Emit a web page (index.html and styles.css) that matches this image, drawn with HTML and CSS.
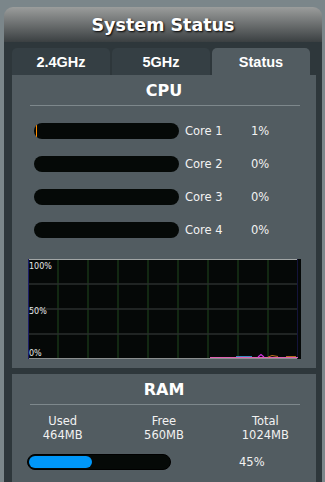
FILE: index.html
```html
<!DOCTYPE html>
<html lang="en">
<head>
    <meta charset="UTF-8">
    <meta name="viewport" content="width=device-width, initial-scale=1.0">
    <title>System Status</title>
    <link rel="stylesheet" href="styles.css">
</head>
<body>
    <div class="panel">
        <div class="header">System Status</div>

        <div class="frame">
            <!-- Pestañas -->
            <div class="tabs">
                <div class="tab">2.4GHz</div>
                <div class="tab">5GHz</div>
                <div class="tab active">Status</div>
            </div>

            <!-- Sección CPU -->
            <div class="section cpu">
                <div class="section-title">CPU</div>
                <div class="divider"></div>

                <div class="core-row">
                    <div class="core-bar"><div class="core-fill" style="width: 1%"></div></div>
                    <span class="core-name">Core 1</span>
                    <span class="core-pct">1%</span>
                </div>
                <div class="core-row">
                    <div class="core-bar"><div class="core-fill" style="width: 0%"></div></div>
                    <span class="core-name">Core 2</span>
                    <span class="core-pct">0%</span>
                </div>
                <div class="core-row">
                    <div class="core-bar"><div class="core-fill" style="width: 0%"></div></div>
                    <span class="core-name">Core 3</span>
                    <span class="core-pct">0%</span>
                </div>
                <div class="core-row">
                    <div class="core-bar"><div class="core-fill" style="width: 0%"></div></div>
                    <span class="core-name">Core 4</span>
                    <span class="core-pct">0%</span>
                </div>

                <!-- Gráfica de uso -->
                <svg class="chart" width="273" height="100" viewBox="0 0 273 100">
                    <rect x="0" y="0" width="273" height="100" fill="#050807"/>
                    <g stroke="#173317" stroke-width="1.5">
                        <line x1="30" y1="0" x2="30" y2="100"/>
                        <line x1="60" y1="0" x2="60" y2="100"/>
                        <line x1="90" y1="0" x2="90" y2="100"/>
                        <line x1="120" y1="0" x2="120" y2="100"/>
                        <line x1="150" y1="0" x2="150" y2="100"/>
                        <line x1="180" y1="0" x2="180" y2="100"/>
                        <line x1="210" y1="0" x2="210" y2="100"/>
                        <line x1="240" y1="0" x2="240" y2="100"/>
                    </g>
                    <g stroke="#2a2e2e" stroke-width="1.5">
                        <line x1="0" y1="25" x2="270" y2="25"/>
                        <line x1="0" y1="50" x2="270" y2="50"/>
                        <line x1="0" y1="75" x2="270" y2="75"/>
                    </g>
                    <line x1="0" y1="0.5" x2="270" y2="0.5" stroke="#a2a6a6"/>
                    <line x1="0" y1="99.5" x2="270" y2="99.5" stroke="#8a8e8e"/>
                    <line x1="0.5" y1="0" x2="0.5" y2="100" stroke="#1c1c66"/>
                    <line x1="269.5" y1="0" x2="269.5" y2="100" stroke="#14143a"/>
                    <!-- trazos de núcleos -->
                    <polyline points="182,98.5 270,98.5" fill="none" stroke="#e060b0" stroke-width="1"/>
                    <polyline points="208,97.5 224,97.5" fill="none" stroke="#3a8ac0" stroke-width="1"/>
                    <polyline points="230,98 233,95.5 236,98" fill="none" stroke="#d030e0" stroke-width="1.2"/>
                    <polyline points="240,98 244,96.5 250,97.5" fill="none" stroke="#c07020" stroke-width="1"/>
                    <polyline points="258,97.5 268,97.5" fill="none" stroke="#b06a20" stroke-width="1"/>
                    <text x="1" y="10" class="chart-label">100%</text>
                    <text x="1" y="55" class="chart-label">50%</text>
                    <text x="1" y="97" class="chart-label">0%</text>
                </svg>
            </div>

            <!-- Sección RAM -->
            <div class="section ram">
                <div class="section-title">RAM</div>
                <div class="divider"></div>

                <div class="ram-stats">
                    <div class="stat"><span>Used</span><span>464MB</span></div>
                    <div class="stat"><span>Free</span><span>560MB</span></div>
                    <div class="stat"><span>Total</span><span>1024MB</span></div>
                </div>

                <div class="ram-row">
                    <div class="ram-bar"><div class="ram-fill" style="width: 45%"></div></div>
                    <span class="ram-pct">45%</span>
                </div>
            </div>
        </div>
    </div>
</body>
</html>
```

FILE: styles.css
```css
/* Fondo general */
body {
    margin: 0;
    background-color: #7b868a;
    font-family: "DejaVu Sans", Verdana, sans-serif;
    color: #fff;
}
/* Panel principal */
.panel {
    margin: 7px 0 0 4px;
    width: 318px;
}
/* Cabecera con degradado */
.header {
    height: 35px;
    line-height: 37px;
    border-radius: 9px 9px 0 0;
    background: linear-gradient(#9b9d9c, #3b4042);
    text-align: center;
    font-size: 17.5px;
    font-weight: bold;
    text-shadow: 1px 1px 2px #000;
}
/* Marco oscuro */
.frame {
    background-color: #2e373b;
    padding: 6px 6px 0 8px;
}
/* Pestañas */
.tabs {
    display: grid;
    grid-template-columns: 98px 98px 98px;
    column-gap: 2px;
}
.tab {
    height: 27px;
    line-height: 29px;
    border-radius: 5px 5px 0 0;
    background-color: #353f44;
    text-align: center;
    font-family: "Liberation Sans", Arial, sans-serif;
    font-weight: bold;
    font-size: 14.5px;
}
.tab.active {
    background-color: #525c61;
}
/* Secciones */
.section {
    background-color: #525c61;
}
.cpu {
    padding-bottom: 9px;
}
.ram {
    margin-top: 6px;
    padding-bottom: 20px;
}
.section-title {
    padding-top: 5px;
    line-height: 22px;
    text-align: center;
    font-size: 16px;
    font-weight: bold;
}
.divider {
    height: 1px;
    margin: 3px 16px 0 18px;
    background-color: #7e888c;
}
/* Filas de núcleos */
.core-row {
    display: flex;
    align-items: center;
    height: 16px;
    margin: 17px 0 0 22px;
    font-size: 11.5px;
}
.core-bar {
    width: 145px;
    height: 16px;
    border-radius: 8px;
    background-color: #050907;
    overflow: hidden;
}
.core-fill {
    height: 100%;
    margin-left: 1.5px;
    background-color: #ff8c00;
}
.core-name {
    margin-left: 6px;
    width: 66px;
    color: #f2f2f2;
}
.core-pct {
    color: #f2f2f2;
}
/* Gráfica */
.chart {
    display: block;
    margin: 21px 0 0 16px;
}
.chart-label {
    font-family: "DejaVu Sans", sans-serif;
    font-size: 8px;
    fill: #e8e8e8;
}
/* Estadísticas RAM */
.ram-stats {
    display: grid;
    grid-template-columns: 1fr 1fr 1fr;
    margin-top: 9px;
    font-size: 11.5px;
    line-height: 14px;
    color: #f2f2f2;
}
.stat {
    display: flex;
    flex-direction: column;
    align-items: center;
}
.ram-row {
    display: flex;
    align-items: center;
    margin: 12px 0 0 15px;
    font-size: 11.5px;
}
.ram-bar {
    width: 140px;
    height: 12px;
    padding: 1px;
    border: 1px solid #000;
    border-radius: 8px;
    background-color: #050907;
}
.ram-fill {
    height: 100%;
    border-radius: 7px;
    background-color: #0097f9;
}
.ram-pct {
    margin-left: 68px;
    color: #f2f2f2;
}
```
